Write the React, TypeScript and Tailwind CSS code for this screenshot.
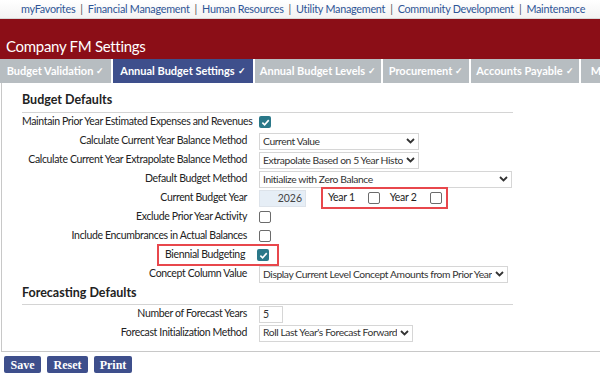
import React from 'react';

const font = { fontFamily: 'Lato, "Open Sans", sans-serif' };

const tabs = [
  { label: 'Budget Validation', w: 'w-[111px]' },
  { label: 'Annual Budget Settings', w: 'w-[140px]', active: true },
  { label: 'Annual Budget Levels', w: 'w-[126px]' },
  { label: 'Procurement', w: 'w-[86px]' },
  { label: 'Accounts Payable', w: 'w-[108px]' },
  { label: 'M', w: 'w-[30px]' },
];

const links = ['myFavorites', 'Financial Management', 'Human Resources', 'Utility Management', 'Community Development', 'Maintenance'];

function Check({ checked }: { checked?: boolean }) {
  if (checked) {
    return (
      <div className="w-[12px] h-[12px] rounded-[2px] bg-[#2a7889] flex items-center justify-center">
        <svg width="9" height="9" viewBox="0 0 10 10">
          <path d="M1.5 5.2 L4 7.6 L8.6 2.4" stroke="white" strokeWidth="1.8" fill="none" />
        </svg>
      </div>
    );
  }
  return <div className="w-[12px] h-[12px] rounded-[2px] border border-[#6b6b6b] bg-white" />;
}

// w empty = sized to its text, like a native select
function Select({ value, w }: { value: string; w?: string }) {
  return (
    <div className={`${w ?? ''} h-[17px] border border-[#d6d6d6] bg-white flex items-center pl-[3px] pr-[3px] text-[10.3px] tracking-[-0.4px] text-[#333]`}>
      <span className={`${w ? 'flex-1' : ''} whitespace-nowrap overflow-hidden`}>{value}</span>
      <svg width="9" height="6" viewBox="0 0 9 6" className="shrink-0 ml-[3px]">
        <path d="M1 1 L4.5 4.5 L8 1" stroke="#333" strokeWidth="1.8" fill="none" />
      </svg>
    </div>
  );
}

function Row({ label, children }: { label: string; children?: React.ReactNode }) {
  return (
    <div className="flex items-center h-[19px]">
      <div className="w-[225px] text-right text-[10.5px] tracking-[-0.35px] text-[#222] whitespace-nowrap">{label}</div>
      <div className="ml-[12px] flex items-center">{children}</div>
    </div>
  );
}

export default function App() {
  return (
    <div className="w-[600px] h-[379px] bg-white overflow-hidden" style={font}>
      <div className="h-[19px] flex items-center pl-[21px] text-[10.8px] tracking-[-0.25px] text-[#2e5596] bg-gradient-to-b from-white to-[#f3f3f3] border-b border-[#d8d8d8] whitespace-nowrap">
        {links.map((l, i) => (
          <span key={l} className="flex items-center">
            {i > 0 && <span className="mx-[5px] text-[#555]">|</span>}
            {l}
          </span>
        ))}
      </div>
      <div className="h-[40px] bg-[#8b0e17] flex items-end pl-[6px] pb-[5px]">
        <span className="text-white text-[15px] tracking-[-0.3px] leading-none">Company FM Settings</span>
      </div>
      <div className="flex h-[24px] gap-[2px] bg-white">
        {tabs.map((t) => (
          <div
            key={t.label}
            className={`${t.w} shrink-0 flex items-center justify-center text-white text-[11px] font-bold whitespace-nowrap overflow-hidden ${t.active ? 'bg-[#3e4f8c]' : 'bg-[#b7bdc1]'}`}
          >
            {t.label}
            {t.label !== 'M' && <span className="ml-[3px] text-[9px]">✓</span>}
          </div>
        ))}
      </div>
      <div className="ml-[1px] h-[269px] border-l border-b border-[#c8c8c8] pt-[8px] pl-[20px]">
        <div className="w-[491px]">
          <div className="text-[12.5px] font-bold text-[#222] pb-[2px] border-b border-[#d4d4d4]">Budget Defaults</div>
          <div>
            <Row label="Maintain Prior Year Estimated Expenses and Revenues"><Check checked /></Row>
            <Row label="Calculate Current Year Balance Method"><Select value="Current Value" w="w-[160px]" /></Row>
            <Row label="Calculate Current Year Extrapolate Balance Method"><Select value="Extrapolate Based on 5 Year Histo" /></Row>
            <Row label="Default Budget Method"><Select value="Initialize with Zero Balance" w="w-[253px]" /></Row>
            <Row label="Current Budget Year">
              <div className="w-[47px] h-[17px] bg-[#e6eef6] border border-[#dde3ea] text-right pr-[3px] text-[10.5px] text-[#444] leading-[15px]">2026</div>
              <div className="ml-[15px] h-[22px] border-2 border-[#e8474c] flex items-center pl-[5px] pr-[4px] text-[10.5px] tracking-[-0.3px] text-[#222]">
                <span>Year 1</span>
                <span className="ml-[13px]"><Check /></span>
                <span className="ml-[10px]">Year 2</span>
                <span className="ml-[13px]"><Check /></span>
              </div>
            </Row>
            <Row label="Exclude Prior Year Activity"><Check /></Row>
            <Row label="Include Encumbrances in Actual Balances"><Check /></Row>
            <div className="flex items-center h-[19px]">
              <div className="w-[225px] flex justify-end">
                <div className="h-[22px] border-2 border-[#e8474c] flex items-center pl-[6px] pr-[8px] -mr-[32px] text-[10.5px] tracking-[-0.35px] text-[#222] whitespace-nowrap">
                  <span>Biennial Budgeting</span>
                  <span className="ml-[12px]"><Check checked /></span>
                </div>
              </div>
            </div>
            <Row label="Concept Column Value"><Select value="Display Current Level Concept Amounts from Prior Year" /></Row>
          </div>
          <div className="text-[12.5px] font-bold text-[#222] pb-[1px] border-b border-[#d4d4d4]">Forecasting Defaults</div>
          <div>
            <Row label="Number of Forecast Years">
              <div className="w-[24px] h-[17px] border border-[#d6d6d6] text-[10.5px] text-[#333] pl-[3px] leading-[15px]">5</div>
            </Row>
            <Row label="Forecast Initialization Method"><Select value="Roll Last Year's Forecast Forward" /></Row>
          </div>
        </div>
      </div>
      <div className="flex gap-[6px] pl-[4px] pt-[4px]" style={{ fontFamily: '"Liberation Serif", serif' }}>
        {['Save', 'Reset', 'Print'].map((b, i) => (
          <div
            key={b}
            className={`${i === 0 ? 'w-[37px]' : i === 1 ? 'w-[41px]' : 'w-[38px]'} h-[17px] rounded-[2px] bg-[#3e4f8c] text-white text-[12px] font-bold flex items-center justify-center`}
          >
            {b}
          </div>
        ))}
      </div>
    </div>
  );
}
